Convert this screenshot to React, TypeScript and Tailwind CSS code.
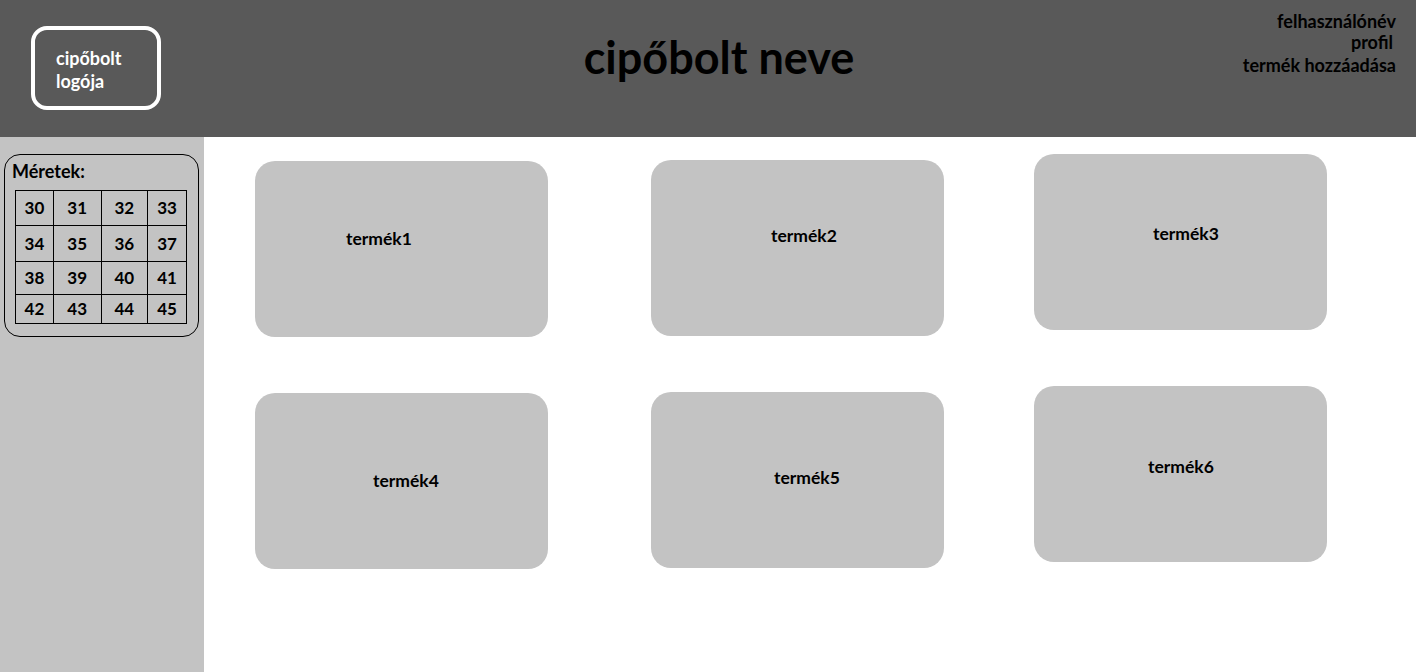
const sizes = [
  ["30", "31", "32", "33"],
  ["34", "35", "36", "37"],
  ["38", "39", "40", "41"],
  ["42", "43", "44", "45"],
];

const rowHeights = ["h-[34px]", "h-[36px]", "h-[33px]", "h-[29px]"];
const colWidths = ["w-[37px]", "w-[48px]", "w-[47px]", "w-[39px]"];

const products = [
  [
    { name: "termék1", box: "mt-[7px] pl-[91px] pt-[68px]" },
    { name: "termék2", box: "ml-[103px] mt-[6px] pl-[120px] pt-[66px]" },
    { name: "termék3", box: "ml-[90px] pl-[119px] pt-[70px]" },
  ],
  [
    { name: "termék4", box: "mt-[7px] pl-[118px] pt-[78px]" },
    { name: "termék5", box: "ml-[103px] mt-[6px] pl-[123px] pt-[76px]" },
    { name: "termék6", box: "ml-[90px] pl-[114px] pt-[71px]" },
  ],
];

export default function App() {
  return (
    <div
      className="flex flex-col w-[1416px] h-[672px] bg-white overflow-hidden font-bold"
      style={{ fontFamily: "Lato, 'Open Sans', sans-serif" }}
    >
      {/* header */}
      <header className="flex flex-row h-[137px] bg-[#595959] shrink-0">
        <div className="w-[200px] pl-[31px] pt-[26px]">
          <div className="w-[130px] h-[84px] border-4 border-white rounded-[16px] pl-[21px] pt-[17px] text-white text-[18px] leading-[23px]">
            cipőbolt
            <br />
            logója
          </div>
        </div>
        <div className="flex-1 flex justify-center pt-[31px] pl-[22px]">
          <h1 className="text-[45px] leading-[52px] text-black">cipőbolt neve</h1>
        </div>
        <nav className="w-[200px] pr-[20px] pt-[11px] flex flex-col items-end text-[18px] leading-[21px] text-black">
          <span>felhasználónév</span>
          <span className="pr-[3px]">profil</span>
          <span className="mt-[2px]">termék hozzáadása</span>
        </nav>
      </header>

      <div className="flex flex-row flex-1">
        {/* sidebar */}
        <aside className="w-[204px] bg-[#c3c3c3] pt-[17px] pl-[4px] shrink-0">
          <div className="w-[195px] h-[183px] border border-black rounded-[16px] pl-[7px] pt-[4px]">
            <div className="text-[18px] leading-[24px] text-black">Méretek:</div>
            <div className="mt-[7px] ml-[3px] border border-black w-[172px]">
              {sizes.map((row, r) => (
                <div
                  key={r}
                  className={`flex flex-row ${rowHeights[r]} ${r > 0 ? "border-t border-black" : ""}`}
                >
                  {row.map((n, c) => (
                    <div
                      key={n}
                      className={`${colWidths[c]} flex items-center justify-center text-[17px] text-black ${c > 0 ? "border-l border-black" : ""}`}
                    >
                      {n}
                    </div>
                  ))}
                </div>
              ))}
            </div>
          </div>
        </aside>

        {/* products */}
        <main className="flex-1 pl-[51px] pt-[17px] flex flex-col gap-[49px]">
          {products.map((row, r) => (
            <div key={r} className="flex flex-row items-start">
              {row.map((p) => (
                <div
                  key={p.name}
                  className={`w-[293px] h-[176px] bg-[#c3c3c3] rounded-[20px] text-[17.5px] leading-[20px] text-black ${p.box}`}
                >
                  {p.name}
                </div>
              ))}
            </div>
          ))}
        </main>
      </div>
    </div>
  );
}
